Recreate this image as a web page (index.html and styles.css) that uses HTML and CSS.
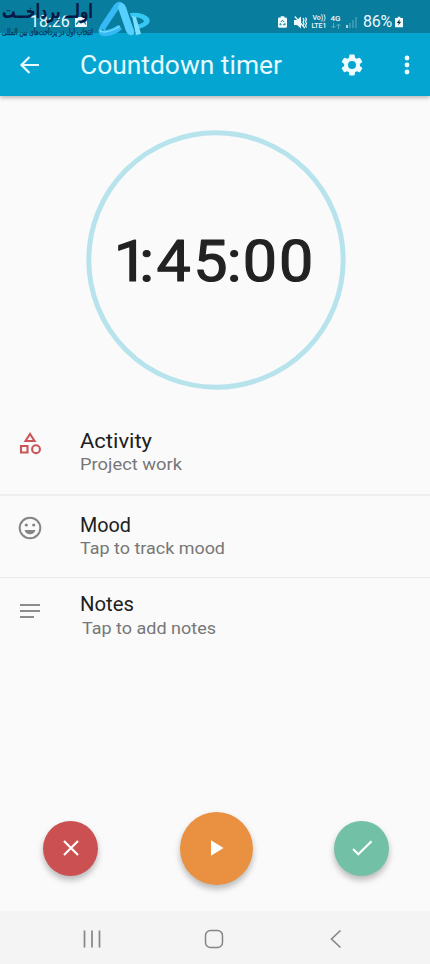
FILE: index.html
```html
<!DOCTYPE html>
<html lang="en">
<head>
<meta charset="utf-8">
<title>Countdown timer</title>
<link rel="stylesheet" href="styles.css">
</head>
<body>
<div class="screen">
  <header class="status">
    <span class="clock">18:26</span>
    <svg class="picture" viewBox="0 0 12 10"><rect width="12" height="10" rx="1" fill="#eefaff"/><path d="M1 7.500 4 4l2 2 2-3 3 4.500" fill="none" stroke="#087b99" stroke-width="1.200"/></svg>
    <div class="signals">
      <svg class="battery-saver" viewBox="0 0 10 13"><path d="M3 0h4v1.500h1.500Q10 1.500 10 3v8.500Q10 13 8.500 13h-7Q0 13 0 11.500V3q0-1.500 1.500-1.500H3z" fill="#effaff"/><path d="m3.200 6.500 1.800-2 1.800 2M7.500 7.500 8 9.500H5.500M4 9.500H2l.8-2" fill="none" stroke="#087b99"/></svg>
      <svg class="mute" viewBox="0 0 13 13"><path d="M0 4h3l4-3.500v12L3 9H0z" fill="#effaff"/><path d="m.8.5 10 11.500M9 2l1 2-1 2 1 2-1 2M11.500 1.500l1 2-1 2 1 2-1 2 1 2" fill="none" stroke="#effaff" stroke-width="1.200"/></svg>
      <span class="volte"><span>Vo))</span><span>LTE1</span></span>
      <span class="network"><span>4G</span><svg viewBox="0 0 10 6"><path d="M2.500 0v5M.5 3l2 2 2-2M7.500 6V1M5.500 3l2-2 2 2" fill="none" stroke="#58afc3"/></svg></span>
      <svg class="bars" viewBox="0 0 11 11"><path d="M1 8v3" stroke="#effaff" stroke-width="1.500"/><path d="M4 6v5M7 3v8M10 0v11" stroke="#4da7be" stroke-width="1.300"/></svg>
      <span class="percent">86%</span>
      <svg class="charging" viewBox="0 0 9 12"><path d="M3 0h3v1.500h3V12H0V1.500h3z" fill="#effaff"/><path d="M5.500 2.500 2 7h2.200l-.7 3L7 5.800H4.800z" fill="#073444"/></svg>
    </div>
    <div class="watermark">
      <svg class="brand" viewBox="0 0 94 30"><text class="brand-name" x="93" y="18" textLength="91" lengthAdjust="spacingAndGlyphs">اولــ پرداخــت</text><text class="brand-tag" x="93" y="35" textLength="91" lengthAdjust="spacingAndGlyphs">انتخاب اول در پرداخت‌های بین المللی</text></svg>
      <svg class="mark" viewBox="97 1 54 37"><path d="M103 32Q100 33 103 27L117 6Q120 3 122 7l10 26" fill="none" stroke="#35baf5" stroke-width="6" stroke-linejoin="round"/><path d="M122 3q3 1 4 4l8 25q0 4-4 3-3-1-4-4L118 8q0-5 4-5z" fill="#56d0ff"/><path d="M99 33q2 4 8 3 9-1 15-7l-4-4q-7 5-14 5z" fill="#35baf5"/><path d="M100 30q0 2 5 2 8-1 15-6" fill="none" stroke="#77dcff" stroke-width="1.500"/><path d="M130 13q13-1 19 5 3 5-5 9l-8 3-2-5q9-1 10-4-2-4-13-4z" fill="#36c8f2"/><path d="m132 16 4 1 5 17-5 1z" fill="#7be0ff"/></svg>
    </div>
  </header>
  <div class="appbar">
    <svg class="back" viewBox="0 0 20 18"><path d="M19 9H2M9.500 1 1.500 9l8 8" fill="none" stroke="#e9fbff" stroke-width="2.200"/></svg>
    <h1><svg viewBox="0 0 204 36"><text x="0" y="27" textLength="202" lengthAdjust="spacingAndGlyphs">Countdown timer</text></svg></h1>
    <svg class="gear" viewBox="2 2 20 20"><path fill="#effcff" d="M19.140 12.940c.04-.3.06-.61.06-.94s-.02-.64-.07-.94l2.030-1.580c.18-.14.23-.41.12-.61l-1.920-3.320c-.12-.22-.37-.29-.59-.22l-2.390.96c-.5-.38-1.030-.7-1.620-.94l-.36-2.540c-.04-.24-.24-.41-.48-.41h-3.840c-.24 0-.43.17-.47.41l-.36 2.540c-.59.24-1.130.57-1.620.94l-2.390-.96c-.22-.08-.47 0-.59.22L2.740 8.870c-.12.21-.08.47.12.61l2.030 1.580c-.05.3-.09.63-.09.94s.02.64.07.94l-2.030 1.580c-.18.14-.23.41-.12.61l1.920 3.320c.12.22.37.29.59.22l2.390-.96c.5.38 1.030.7 1.620.94l.36 2.540c.05.24.24.41.48.41h3.840c.24 0 .44-.17.47-.41l.36-2.540c.59-.24 1.130-.56 1.620-.94l2.390.96c.22.08.47 0 .59-.22l1.920-3.320c.12-.22.07-.47-.12-.61zM12 15.600a3.600 3.600 0 1 1 0-7.200 3.600 3.600 0 0 1 0 7.200z"/></svg>
    <svg class="more" viewBox="0 0 6 20"><g fill="#effcff"><circle cx="3" cy="3" r="2.400"/><circle cx="3" cy="10" r="2.400"/><circle cx="3" cy="17" r="2.400"/></g></svg>
  </div>
  <main>
    <section class="timer">
      <svg viewBox="0 0 260 260"><circle cx="130" cy="130" r="127.200" fill="none" stroke="#b7e3ec" stroke-width="5"/><text class="time" transform="translate(130 151) scale(1.070 1)" x="-95.500 -71.800 -55.500 -21.300 10 25 59" y="0">1:45:00</text></svg>
    </section>
    <section class="row activity">
      <svg class="icon" viewBox="0 0 24 24"><path d="m12 2-4.500 7h9zM3 14h6.500v6.500H3z" fill="none" stroke="#cb5658" stroke-width="2.100"/><circle cx="18" cy="17.200" r="3.900" fill="none" stroke="#cb5658" stroke-width="2.100"/></svg>
      <div class="copy"><svg class="label" viewBox="0 0 150 26"><text x="0" y="20" textLength="72" lengthAdjust="spacingAndGlyphs">Activity</text></svg><svg class="detail" viewBox="0 0 160 22"><text x="0" y="16" textLength="102" lengthAdjust="spacingAndGlyphs">Project work</text></svg></div>
    </section>
    <section class="row mood">
      <svg class="icon" viewBox="0 0 24 24"><circle cx="12" cy="12" r="10.300" fill="none" stroke="#858585" stroke-width="2"/><circle cx="8.300" cy="9" r="1.600" fill="#858585"/><circle cx="15.700" cy="9" r="1.600" fill="#858585"/><path d="M6.500 14h11q-1.500 4.300-5.500 4.300T6.500 14z" fill="#858585"/></svg>
      <div class="copy"><svg class="label" viewBox="0 0 150 26"><text x="0" y="20" textLength="51" lengthAdjust="spacingAndGlyphs">Mood</text></svg><svg class="detail" viewBox="0 0 160 22"><text x="0" y="16" textLength="145" lengthAdjust="spacingAndGlyphs">Tap to track mood</text></svg></div>
    </section>
    <section class="row notes">
      <svg class="icon" viewBox="0 0 24 24"><path d="M2 6h20M2 12h20M2 18h14" stroke="#8c8c8c" stroke-width="2"/></svg>
      <div class="copy"><svg class="label" viewBox="0 0 150 26"><text x="0" y="20" textLength="54" lengthAdjust="spacingAndGlyphs">Notes</text></svg><svg class="detail" viewBox="0 0 160 22"><text x="2" y="17" textLength="134" lengthAdjust="spacingAndGlyphs">Tap to add notes</text></svg></div>
    </section>
  </main>
  <div class="actions">
    <button class="fab cancel" aria-label="Cancel"><svg viewBox="0 0 20 20"><path d="m3 3 14 14M17 3 3 17" stroke="#fff" stroke-width="2.200"/></svg></button>
    <button class="fab play" aria-label="Start"><svg viewBox="0 0 20 20"><path d="M5 2.300v15.400L17.500 10z" fill="#fff"/></svg></button>
    <button class="fab done" aria-label="Done"><svg viewBox="0 0 20 20"><path d="m1 11 5.300 5.200L19.500 3.200" fill="none" stroke="#fff" stroke-width="2.200"/></svg></button>
  </div>
  <nav>
    <svg viewBox="0 0 20 20"><path d="M2.500 1.500v17M10 1.500v17M17.500 1.500v17" stroke="#858585" stroke-width="1.700"/></svg>
    <svg viewBox="0 0 20 20"><rect x="1.500" y="1.500" width="17" height="17" rx="5" fill="none" stroke="#858585" stroke-width="1.500"/></svg>
    <svg viewBox="0 0 20 20"><path d="M14.500 1.500 5.500 10l9 8.500" fill="none" stroke="#858585" stroke-width="1.600"/></svg>
  </nav>
</div>
</body>
</html>
```
FILE: styles.css
```css
* { box-sizing: border-box; }
body { margin: 0; font-family: Roboto, "Noto Sans", sans-serif; }
svg { display: block; flex: none; overflow: visible; }
.screen { width: 430px; height: 964px; display: flex; flex-direction: column; background: #fafafa; overflow: hidden; }
.status { position: relative; z-index: 2; flex: 0 0 33px; display: flex; align-items: center; padding: 11px 27px 0 30px; background: #087d9d; color: #eefaff; }
.clock { width: 39px; font-size: 16px; line-height: 20px; white-space: nowrap; }
.picture { width: 12px; height: 10px; margin-left: 6px; }
.signals { margin-left: auto; display: flex; align-items: center; }
.battery-saver { width: 9px; height: 12px; margin-right: 7px; }
.mute { width: 13px; height: 13px; margin-right: 4px; }
.volte, .network { display: flex; flex-direction: column; font-size: 8px; line-height: 8px; font-weight: 500; }
.volte { width: 16px; align-items: center; font-size: 7px; margin-right: 3px; }
.network { width: 11px; align-items: center; margin-right: 5px; }
.network svg { width: 10px; height: 6px; }
.bars { width: 11px; height: 11px; margin-right: 6px; }
.percent { width: 30px; font-size: 16px; line-height: 20px; letter-spacing: -.3px; }
.charging { width: 8px; height: 12px; margin-left: 2px; }
.watermark { position: absolute; left: 0; top: 0; width: 152px; height: 38px; display: flex; }
.brand { width: 94px; height: 30px; direction: rtl; }
.brand text { font-family: "DejaVu Sans", sans-serif; fill: #082f59; }
.brand .brand-name { font-size: 20px; font-weight: 700; fill: #071a45; }
.brand .brand-tag { font-size: 9px; font-weight: 400; stroke: #082f59; stroke-width: .25px; }
.mark { width: 54px; height: 37px; margin: 1px 0 0 3px; }
.appbar { position: relative; z-index: 1; flex: 0 0 63px; display: flex; align-items: center; padding: 1px 20px 0; background: #04a5d0; box-shadow: 0 2px 4px #0004; }
.back { width: 20px; height: 18px; }
h1 { margin: 0 57px 0 40px; font-weight: 400; }
h1 svg { width: 204px; height: 36px; }
h1 text { font-size: 25px; fill: #e7faff; }
.gear { width: 22px; height: 22px; }
.more { width: 6px; height: 20px; margin-left: 41px; }
main { flex: 1; display: flex; flex-direction: column; }
.timer { height: 315px; padding: 34px 0 0 86px; }
.timer svg { width: 260px; height: 260px; }
.time { font-size: 57px; font-weight: 400; fill: #222; stroke: #222; stroke-width: 1.2px; stroke-linejoin: round; }
.row { display: flex; padding-left: 18px; }
.icon { width: 24px; height: 24px; margin-right: 38px; }
.copy { display: flex; flex-direction: column; }
.label { width: 150px; height: 26px; }
.label text { font-size: 20px; fill: #202020; }
.detail { width: 160px; height: 22px; }
.detail text { font-size: 17px; fill: #777; }
.activity { height: 85px; padding-top: 17px; border-bottom: 2px solid #eee; }
.activity .icon { margin-top: 4px; }
.mood { height: 82px; padding-top: 16px; border-bottom: 1px solid #eaeaea; }
.mood .icon { margin-top: 4px; }
.notes { padding-top: 12px; }
.notes .icon { margin-top: 9px; }
.notes .label { height: 27px; }
.actions { height: 126px; display: flex; justify-content: space-between; align-items: center; padding: 0 41px 0 43px; }
.fab { border: 0; padding: 0; border-radius: 50%; width: 55px; height: 55px; display: grid; place-items: center; box-shadow: 0 4px 6px #0004; }
.fab svg { width: 20px; height: 20px; }
.cancel { background: #cb5051; }
.play { width: 73px; height: 73px; background: #e99140; }
.done { background: #72c0a5; }
nav { flex: 0 0 53px; display: flex; justify-content: space-between; padding: 18px 84px 0 82px; background: #f4f4f4; }
nav svg { width: 20px; height: 20px; }
```
